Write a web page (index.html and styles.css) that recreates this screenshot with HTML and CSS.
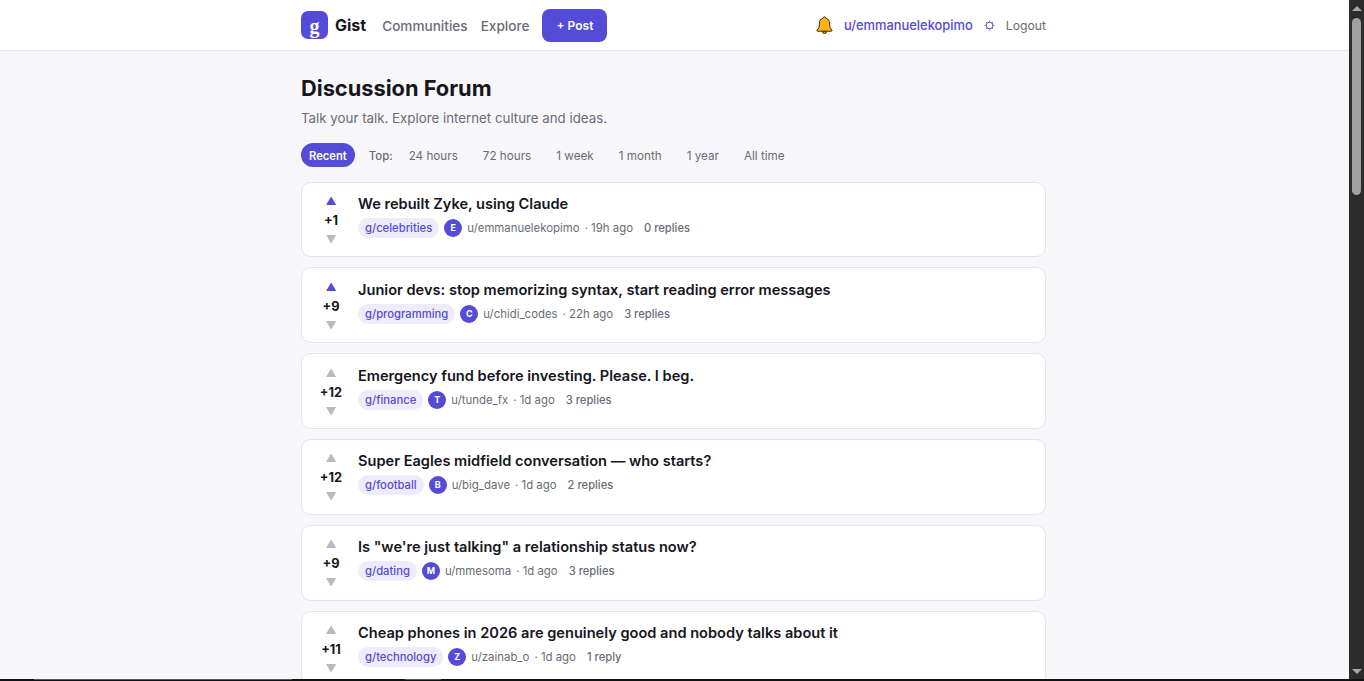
FILE: index.html
```html
<!DOCTYPE html>
<html lang="en">
<head>
  <meta charset="UTF-8" />
  <title>Gist - Discussion Forum</title>
  <meta name="viewport" content="width=device-width, initial-scale=1.0" />
  <link rel="stylesheet" href="styles.css">
</head>
<body>
  <div class="navbar">
    <div class="nav-inner">
      <a class="brand" href="#"><span class="logo">g</span><span class="brand-name">Gist</span></a>
      <a class="nav-link" href="#">Communities</a>
      <a class="nav-link" href="#">Explore</a>
      <a class="post-btn" href="#">+ Post</a>
      <div class="user-info">
        <svg class="bell" width="17" height="18" viewBox="0 0 17 18">
          <path d="M8.500.8c-.8 0-1.300.6-1.300 1.300C4.600 2.800 3.400 5 3.400 7.800c0 3-.8 5-2.300 6.200-.5.500-.2 1.200.5 1.200h13.800c.7 0 1-.7.5-1.200-1.500-1.200-2.300-3.200-2.300-6.200 0-2.800-1.200-5-3.800-5.700 0-.7-.5-1.300-1.300-1.300z" fill="#fdb515" stroke="#3a2c05" stroke-width="1"/>
          <path d="M6.300 15.400a2.200 2.200 0 0 0 4.400 0z" fill="#d9860a" stroke="#3a2c05" stroke-width=".8"/>
        </svg>
        <a class="user-link" href="#">u/emmanuelekopimo</a>
        <svg class="gear" width="11" height="11" viewBox="0 0 11 11">
          <circle cx="5.500" cy="5.500" r="3.200" fill="none" stroke="#6a5fc9" stroke-width="1.100"/>
          <path d="M5.500.6v1.200M5.500 9.200v1.200M.6 5.500h1.200M9.200 5.500h1.200M2 2l.9.9M8.100 8.100l.9.9M2 9l.9-.9M8.100 2.900L9 2" stroke="#6a5fc9" stroke-width="1"/>
        </svg>
        <a class="logout" href="#">Logout</a>
      </div>
    </div>
  </div>

  <div class="page">
    <div class="content">
      <h1>Discussion Forum</h1>
      <p class="subtitle">Talk your talk. Explore internet culture and ideas.</p>

      <div class="filters">
        <a class="pill active" href="#">Recent</a>
        <span class="top-label">Top:</span>
        <a class="pill" href="#">24 hours</a>
        <a class="pill" href="#">72 hours</a>
        <a class="pill" href="#">1 week</a>
        <a class="pill" href="#">1 month</a>
        <a class="pill" href="#">1 year</a>
        <a class="pill" href="#">All time</a>
      </div>

      <div class="post">
        <div class="votes"><span class="arrow on">▲</span><span class="score">+1</span><span class="arrow">▼</span></div>
        <div class="post-body">
          <h3>We rebuilt Zyke, using Claude</h3>
          <div class="meta"><a class="tag" href="#">g/celebrities</a><span class="avatar">E</span><span>u/emmanuelekopimo</span><span class="time">· 19h ago</span><span class="replies">0 replies</span></div>
        </div>
      </div>

      <div class="post">
        <div class="votes"><span class="arrow on">▲</span><span class="score">+9</span><span class="arrow">▼</span></div>
        <div class="post-body">
          <h3>Junior devs: stop memorizing syntax, start reading error messages</h3>
          <div class="meta"><a class="tag" href="#">g/programming</a><span class="avatar">C</span><span>u/chidi_codes</span><span class="time">· 22h ago</span><span class="replies">3 replies</span></div>
        </div>
      </div>

      <div class="post">
        <div class="votes"><span class="arrow">▲</span><span class="score">+12</span><span class="arrow">▼</span></div>
        <div class="post-body">
          <h3>Emergency fund before investing. Please. I beg.</h3>
          <div class="meta"><a class="tag" href="#">g/finance</a><span class="avatar">T</span><span>u/tunde_fx</span><span class="time">· 1d ago</span><span class="replies">3 replies</span></div>
        </div>
      </div>

      <div class="post">
        <div class="votes"><span class="arrow">▲</span><span class="score">+12</span><span class="arrow">▼</span></div>
        <div class="post-body">
          <h3>Super Eagles midfield conversation — who starts?</h3>
          <div class="meta"><a class="tag" href="#">g/football</a><span class="avatar">B</span><span>u/big_dave</span><span class="time">· 1d ago</span><span class="replies">2 replies</span></div>
        </div>
      </div>

      <div class="post">
        <div class="votes"><span class="arrow">▲</span><span class="score">+9</span><span class="arrow">▼</span></div>
        <div class="post-body">
          <h3>Is "we're just talking" a relationship status now?</h3>
          <div class="meta"><a class="tag" href="#">g/dating</a><span class="avatar">M</span><span>u/mmesoma</span><span class="time">· 1d ago</span><span class="replies">3 replies</span></div>
        </div>
      </div>

      <div class="post">
        <div class="votes"><span class="arrow">▲</span><span class="score">+11</span><span class="arrow">▼</span></div>
        <div class="post-body">
          <h3>Cheap phones in 2026 are genuinely good and nobody talks about it</h3>
          <div class="meta"><a class="tag" href="#">g/technology</a><span class="avatar">Z</span><span>u/zainab_o</span><span class="time">· 1d ago</span><span class="replies">1 reply</span></div>
        </div>
      </div>
    </div>
  </div>

  <div class="scrollbar">
    <span class="scroll-up"></span>
    <span class="scroll-thumb"></span>
    <span class="scroll-down"></span>
  </div>
  <div class="window-edge"><span class="edge-a"></span><span class="edge-b"></span></div>
</body>
</html>
```

FILE: styles.css
```css
:root {
  --primary: #544bd8;
  --text: #16161d;
  --muted: #6b6b76;
  --line: #e4e4e9;
  --light: #f7f7fa;
}
* { margin: 0; padding: 0; box-sizing: border-box; }
html { scrollbar-width: none; }
body {
  font-family: Inter, "Noto Sans", sans-serif;
  background: var(--light);
  color: var(--text);
}
a {
  text-decoration: none;
  color: inherit;
}
.navbar {
  height: 51px;
  padding-right: 17px;
  background: #fff;
  border-bottom: 1px solid var(--line);
}
.nav-inner {
  width: 745px;
  height: 50px;
  margin: 0 auto;
  display: flex;
  align-items: center;
}
.brand {
  display: flex;
  align-items: center;
  gap: 7px;
  margin-right: 16px;
}
.logo {
  width: 27px;
  height: 28px;
  border-radius: 7px;
  background: var(--primary);
  color: #fff;
  font-family: "Liberation Serif", serif;
  font-weight: 700;
  font-size: 20px;
  line-height: 30px;
  text-align: center;
}
.brand-name {
  font-size: 16px;
  font-weight: 700;
}
.nav-link {
  font-size: 13.6px;
  font-weight: 500;
  color: var(--muted);
  margin-right: 13px;
  padding-top: 1px;
}
.post-btn {
  background: var(--primary);
  color: #fff;
  font-size: 12px;
  font-weight: 600;
  width: 65px;
  height: 33px;
  line-height: 33px;
  text-align: center;
  border-radius: 8px;
}
.user-info {
  margin-left: auto;
  display: flex;
  align-items: center;
}
.bell { margin-right: 11px; }
.user-link {
  font-size: 12.9px;
  font-weight: 500;
  color: var(--primary);
  margin-right: 11px;
}
.gear { margin-right: 11px; }
.logout {
  font-size: 12.2px;
  color: var(--muted);
}
.page {
  padding-right: 17px;
}
.content {
  width: 745px;
  margin: 0 auto;
  padding-top: 24px;
  padding-bottom: 24px;
}
h1 {
  font-size: 21.8px;
  font-weight: 700;
  line-height: 26px;
}
.subtitle {
  margin-top: 7px;
  font-size: 13.3px;
  line-height: 20px;
  color: var(--muted);
}
.filters {
  display: flex;
  align-items: center;
  margin-top: 15px;
  margin-bottom: 14.6px;
  height: 24px;
  font-size: 11.7px;
  color: var(--muted);
}
.pill {
  padding: 2px 8px 0;
  line-height: 22px;
  margin-right: 9px;
  border-radius: 12px;
}
.pill.active {
  background: var(--primary);
  color: #fff;
  font-size: 11.2px;
  font-weight: 600;
  margin-right: 14px;
}
.top-label {
  font-size: 11.4px;
  font-weight: 500;
  margin-right: 8px;
  padding-top: 2px;
}
.post {
  display: flex;
  height: 75.8px;
  margin-bottom: 10px;
  padding: 11.4px 16px 0 17px;
  background: #fff;
  border: 1px solid var(--line);
  border-radius: 10px;
}
.votes {
  width: 24px;
  margin-right: 15px;
  display: flex;
  flex-direction: column;
  align-items: center;
}
.arrow {
  font-size: 11px;
  line-height: 14px;
  color: #b9b9c2;
}
.arrow.on { color: var(--primary); }
.score {
  margin: 5px 0 3px;
  font-size: 12.8px;
  font-weight: 700;
  line-height: 16px;
}
h3 {
  font-size: 14.6px;
  font-weight: 600;
  line-height: 20px;
}
.meta {
  display: flex;
  align-items: center;
  margin-top: 4px;
  font-size: 11.4px;
  color: var(--muted);
}
.tag {
  background: #eeecfb;
  color: var(--primary);
  font-size: 11.25px;
  font-weight: 500;
  padding: 0 7px;
  line-height: 20px;
  border-radius: 10px;
  margin-right: 5px;
}
.avatar {
  width: 18px;
  height: 18px;
  border-radius: 50%;
  background: var(--primary);
  color: #fff;
  font-size: 9px;
  font-weight: 700;
  line-height: 18px;
  text-align: center;
  margin-right: 5px;
}
.time { margin-left: 5px; }
.replies {
  margin-left: 11px;
  font-size: 11.2px;
  font-weight: 500;
}
/* window chrome from the capture, sits over the page */
.scrollbar {
  position: fixed;
  top: 0;
  right: 0;
  bottom: 2px;
  width: 15px;
  background: #2c2c2c;
  display: flex;
  flex-direction: column;
  align-items: center;
}
.scroll-up {
  margin-top: 6px;
  border-left: 5px solid transparent;
  border-right: 5px solid transparent;
  border-bottom: 5px solid #a6a6a6;
}
.scroll-thumb {
  width: 9px;
  height: 177px;
  margin-top: 7px;
  background: #a0a0a0;
  border-radius: 5px;
}
.scroll-down {
  margin-top: auto;
  margin-bottom: 5px;
  border-left: 5px solid transparent;
  border-right: 5px solid transparent;
  border-top: 5px solid #a6a6a6;
}
.window-edge {
  position: fixed;
  left: 0;
  right: 0;
  bottom: 0;
  height: 2px;
  background: #111;
}
.edge-a, .edge-b {
  position: absolute;
  top: 0;
  height: 1px;
  background: #555;
}
.edge-a { left: 34px; width: 258px; }
.edge-b { left: 405px; width: 36px; }
```
